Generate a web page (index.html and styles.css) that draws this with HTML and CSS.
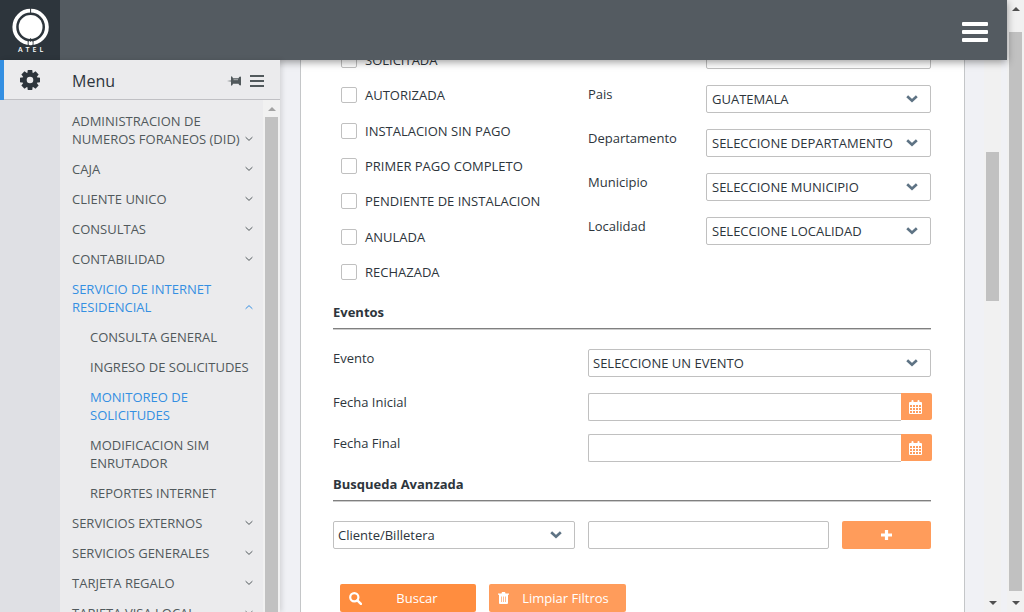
FILE: index.html
```html
<!DOCTYPE html>
<html lang="es">
<head>
<meta charset="utf-8">
<title>Monitoreo de solicitudes</title>
<link rel="stylesheet" href="styles.css">
</head>
<body>
<svg class="sprite" aria-hidden="true">
  <symbol id="down" viewBox="0 0 12 8"><path d="M1.200 1.300L6 5.700l4.800-4.400" fill="none" stroke="currentColor" stroke-width="2.700"/></symbol>
  <symbol id="angle" viewBox="0 0 8 6"><path d="M.6 1.200L4 4.400l3.400-3.200" fill="none" stroke="currentColor" stroke-width="1"/></symbol>
  <symbol id="calendar" viewBox="0 0 13 14"><path fill="currentColor" fill-rule="evenodd" d="M1 2h1.500V1Q2.500 0 3.500 0t1 1v1h4V1q0-1 1-1t1 1v1H12q1 0 1 1v10q0 1-1 1H1q-1 0-1-1V3q0-1 1-1zM1 5v2h2V5zm3 0v2h2V5zm3 0v2h2V5zm3 0v2h2V5zM1 8v2h2V8zm3 0v2h2V8zm3 0v2h2V8zm3 0v2h2V8zM1 11v2h2v-2zm3 0v2h2v-2zm3 0v2h2v-2zm3 0v2h2v-2z"/></symbol>
  <symbol id="up-tri" viewBox="0 0 8 4"><path d="M0 4h8L4 0z" fill="currentColor"/></symbol>
  <symbol id="down-tri" viewBox="0 0 8 4"><path d="M0 0h8L4 4z" fill="currentColor"/></symbol>
</svg>
<div class="viewport">
  <div class="app">
    <header class="topbar">
      <a class="logo" href="#" aria-label="ATEL">
        <svg width="60" height="60" viewBox="0 0 60 60">
          <circle cx="30.600" cy="27" r="16.300" fill="none" stroke="#fff" stroke-width="3.800"/>
          <path d="M30.600 8v5.500M28.200 41v6M33 41v6" stroke="#2d353c" stroke-width="1"/>
          <circle cx="30.600" cy="27" r="11.900" fill="#fff"/>
          <circle cx="30.600" cy="43" r="1.900" fill="#fff"/>
          <path d="M30.600 38v4" stroke="#2d353c" stroke-width=".8"/>
          <text class="logo-text" x="18 25.500 32.500 39.500" y="52">ATEL</text>
        </svg>
      </a>
      <button class="burger" type="button" aria-label="Abrir menu"><span></span><span></span><span></span></button>
    </header>
    <div class="body">
      <aside class="sidebar">
        <div class="sidebar-head">
          <button class="gear" type="button" aria-label="Configuracion">
            <svg width="20" height="20" viewBox="0 0 20 20"><g fill="currentColor"><path id="t" d="M7.800 0h4.400l.8 5H7z"/><use href="#t" transform="rotate(45 10 10)"/><use href="#t" transform="rotate(90 10 10)"/><use href="#t" transform="rotate(135 10 10)"/><use href="#t" transform="rotate(180 10 10)"/><use href="#t" transform="rotate(225 10 10)"/><use href="#t" transform="rotate(270 10 10)"/><use href="#t" transform="rotate(315 10 10)"/></g><circle cx="10" cy="10" r="5.300" fill="none" stroke="currentColor" stroke-width="4"/></svg>
          </button>
          <h1>Menu</h1>
          <button class="plain" type="button" aria-label="Fijar menu"><svg width="14" height="10" viewBox="0 0 14 10"><path fill="currentColor" d="M0 5l4-.6V1q0-.8.600-.8 1 .3 1.400 2h5.500Q12 .5 13.200.5q.8 0 .8.800v7.400q0 .8-.8.800-1.200 0-1.700-1.700H6q-.4 1.700-1.400 2Q4 9.800 4 9V5.600z"/><path d="M6.500 3.700h4.500" stroke="#ebebed" stroke-width=".6"/></svg></button>
          <button class="plain" type="button" aria-label="Contraer menu"><svg width="14" height="12" viewBox="0 0 14 12"><path d="M0 1h14M0 6h14M0 11h14" stroke="currentColor" stroke-width="2"/></svg></button>
        </div>
        <div class="sidebar-body">
          <div class="rail"></div>
          <nav class="menu" aria-label="Menu">
            <ul>
              <li><a href="#"><span>ADMINISTRACION DE NUMEROS FORANEOS (DID)</span><svg><use href="#angle"/></svg></a></li>
              <li><a href="#"><span>CAJA</span><svg><use href="#angle"/></svg></a></li>
              <li><a href="#"><span>CLIENTE UNICO</span><svg><use href="#angle"/></svg></a></li>
              <li><a href="#"><span>CONSULTAS</span><svg><use href="#angle"/></svg></a></li>
              <li><a href="#"><span>CONTABILIDAD</span><svg><use href="#angle"/></svg></a></li>
              <li><a class="active open" href="#"><span>SERVICIO DE INTERNET RESIDENCIAL</span><svg><use href="#angle"/></svg></a>
                <ul class="submenu">
                  <li><a href="#">CONSULTA GENERAL</a></li>
                  <li><a href="#">INGRESO DE SOLICITUDES</a></li>
                  <li><a class="active" href="#">MONITOREO DE SOLICITUDES</a></li>
                  <li><a href="#">MODIFICACION SIM ENRUTADOR</a></li>
                  <li><a href="#">REPORTES INTERNET</a></li>
                </ul>
              </li>
              <li><a href="#"><span>SERVICIOS EXTERNOS</span><svg><use href="#angle"/></svg></a></li>
              <li><a href="#"><span>SERVICIOS GENERALES</span><svg><use href="#angle"/></svg></a></li>
              <li><a href="#"><span>TARJETA REGALO</span><svg><use href="#angle"/></svg></a></li>
              <li><a href="#"><span>TARJETA VISA LOCAL</span><svg><use href="#angle"/></svg></a></li>
            </ul>
          </nav>
          <div class="scroll scroll-menu" aria-hidden="true"><svg class="tri"><use href="#up-tri"/></svg><div class="thumb"></div></div>
        </div>
      </aside>
      <main class="main">
        <form class="card">
          <section class="columns filters">
            <ul class="checks">
              <li><input type="checkbox" id="c1"><label for="c1">SOLICITADA</label></li>
              <li><input type="checkbox" id="c2"><label for="c2">AUTORIZADA</label></li>
              <li><input type="checkbox" id="c3"><label for="c3">INSTALACION SIN PAGO</label></li>
              <li><input type="checkbox" id="c4"><label for="c4">PRIMER PAGO COMPLETO</label></li>
              <li><input type="checkbox" id="c5"><label for="c5">PENDIENTE DE INSTALACION</label></li>
              <li><input type="checkbox" id="c6"><label for="c6">ANULADA</label></li>
              <li><input type="checkbox" id="c7"><label for="c7">RECHAZADA</label></li>
            </ul>
            <div class="places wide">
              <input class="box first" type="text" aria-label="Filtro">
              <label for="pais">Pais</label>
              <div class="select"><select id="pais"><option>GUATEMALA</option></select><svg><use href="#down"/></svg></div>
              <label for="depto">Departamento</label>
              <div class="select"><select id="depto"><option>SELECCIONE DEPARTAMENTO</option></select><svg><use href="#down"/></svg></div>
              <label for="muni">Municipio</label>
              <div class="select"><select id="muni"><option>SELECCIONE MUNICIPIO</option></select><svg><use href="#down"/></svg></div>
              <label for="loc">Localidad</label>
              <div class="select"><select id="loc"><option>SELECCIONE LOCALIDAD</option></select><svg><use href="#down"/></svg></div>
            </div>
          </section>
          <h2>Eventos</h2>
          <section class="columns">
            <label for="evento">Evento</label>
            <div class="select wide"><select id="evento"><option>SELECCIONE UN EVENTO</option></select><svg><use href="#down"/></svg></div>
          </section>
          <section class="columns dates">
            <label for="fi">Fecha Inicial</label>
            <div class="date wide"><input class="box" type="text" id="fi"><button type="button" aria-label="Elegir fecha inicial"><svg width="13" height="14"><use href="#calendar"/></svg></button></div>
            <label for="ff">Fecha Final</label>
            <div class="date wide"><input class="box" type="text" id="ff"><button type="button" aria-label="Elegir fecha final"><svg width="13" height="14"><use href="#calendar"/></svg></button></div>
          </section>
          <h2>Busqueda Avanzada</h2>
          <section class="columns">
            <div class="select"><select aria-label="Campo de busqueda"><option>Cliente/Billetera</option></select><svg><use href="#down"/></svg></div>
            <input class="box" type="text" aria-label="Valor a buscar">
            <button class="btn add" type="button" aria-label="Agregar"><svg width="11" height="10" viewBox="0 0 11 10"><path d="M5.500 0v10M0 5h11" stroke="#fff" stroke-width="3.200"/></svg></button>
          </section>
          <div class="actions">
            <button class="btn primary" type="submit"><svg width="13" height="13" viewBox="0 0 13 13"><circle cx="5.300" cy="5.300" r="4.100" fill="none" stroke="#fff" stroke-width="2.200"/><path d="M8.300 8.300l3.600 3.600" stroke="#fff" stroke-width="2.400" stroke-linecap="round"/></svg><span>Buscar</span></button>
            <button class="btn" type="reset"><svg width="11" height="12" viewBox="0 0 11 12"><path fill="#fff" d="M3.500 1.500L4 0h3l.5 1.500H11v1.300h-1V11q0 1-1 1H2q-1 0-1-1V2.800H0V1.500z"/><path d="M3.500 4.500v5.500M5.500 4.500v5.500M7.500 4.500v5.500" stroke="#ff9c5b" stroke-width=".7"/></svg><span>Limpiar Filtros</span></button>
          </div>
        </form>
        <div class="scroll scroll-main" aria-hidden="true"><div class="thumb"></div><svg class="tri"><use href="#down-tri"/></svg></div>
      </main>
    </div>
  </div>
  <div class="scroll scroll-page" aria-hidden="true"><svg class="tri"><use href="#up-tri"/></svg><div class="thumb"></div><svg class="tri"><use href="#down-tri"/></svg></div>
</div>
</body>
</html>
```
FILE: styles.css
```css
* { box-sizing: border-box; }
body { margin: 0; font: 13px/18px "Open Sans", sans-serif; color: #2d353c; }
ul { list-style: none; margin: 0; padding: 0; }
a { color: inherit; text-decoration: none; }
button, input, select { font: inherit; color: inherit; margin: 0; }
button { border: 0; padding: 0; background: none; }
svg { display: block; }
.sprite { position: absolute; width: 0; height: 0; }

.viewport { display: flex; height: 100vh; overflow: hidden; background: #f0f1f5; }
.app { flex: 1; min-width: 0; display: flex; flex-direction: column; }
.topbar { position: relative; z-index: 2; flex: none; display: flex; justify-content: space-between; align-items: center; height: 60px; padding-right: 19px; background: #545b61; box-shadow: 0 2px 8px rgba(0, 0, 0, .4); }
.logo { background: #2d353c; }
.logo-text { font: 600 7px "Open Sans", sans-serif; fill: #fff; }
.burger { display: grid; gap: 4px; width: 26px; padding-top: 4px; }
.burger span { height: 4px; background: #fff; border-radius: 1px; }

.body { flex: 1; min-height: 0; display: flex; }
.sidebar { position: relative; z-index: 3; flex: none; width: 280px; display: flex; flex-direction: column; background: #ebebed; box-shadow: 2px 0 5px rgba(0, 0, 0, .12); }
.sidebar-head { flex: none; display: flex; align-items: center; gap: 9px; height: 40px; padding-right: 16px; border-bottom: 1px solid #c0c0c4; }
.gear { width: 60px; height: 40px; display: grid; place-items: center; border-left: 4px solid #348fe2; padding-right: 4px; color: #2d353c; }
.sidebar-head h1 { flex: 1; margin: 0; padding: 2px 0 0 3px; font-size: 16px; font-weight: 400; line-height: 24px; }
.plain { color: #51595c; padding-top: 3px; }
.sidebar-body { flex: 1; min-height: 0; display: flex; }
.rail { flex: none; width: 60px; background: #dfe0e4; }
.menu { flex: 1; min-width: 0; padding: 6px 10px 0 12px; overflow: hidden; color: #51595c; }
.menu a { display: flex; justify-content: space-between; align-items: flex-end; gap: 4px; padding: 6px 0; }
.menu a svg { flex: none; width: 8px; height: 6px; margin-bottom: 6px; }
.menu .active { color: #348fe2; }
.menu .open svg { transform: rotate(180deg); }
.submenu { padding-left: 18px; }

.scroll { flex: none; display: flex; flex-direction: column; align-items: center; background: #f1f1f1; color: #505050; }
.scroll .tri { flex: none; width: 8px; height: 4px; margin: 7px 0; }
.thumb { width: 13px; background: #c1c1c1; }
.scroll-menu { width: 17px; color: #a3a3a3; }
.scroll-menu .thumb { flex: 1; }
.scroll-menu .tri { margin-bottom: 6px; }
.scroll-main { width: 17px; }
.scroll-main .thumb { height: 149px; margin-top: 92px; margin-bottom: auto; }
.scroll-page { width: 17px; }
.scroll-page .thumb { flex: 1; margin: 14px 0 3px; }

.main { flex: 1; min-width: 0; display: flex; gap: 19px; padding: 0 6px 0 20px; overflow: hidden; }
.card { flex: 1; min-width: 0; padding: 0 33px 0 32px; background: #fff; border: 1px solid #c4c6c8; border-width: 0 1px; }
.columns { display: grid; grid-template-columns: 242fr 241fr 89fr; gap: 13px; align-items: start; }
.wide { grid-column: span 2; }
.filters { margin-top: -19px; }
.checks { display: flex; flex-direction: column; justify-content: space-between; height: 228px; margin: 11px 0 1px; padding-left: 8px; }
.checks li { display: flex; align-items: center; gap: 8px; height: 16px; }
.checks input { appearance: none; width: 16px; height: 16px; border: 1px solid #c0c0c0; border-radius: 2px; background: #fff; }
.places { display: grid; grid-template-columns: 118fr 225fr; row-gap: 16px; }
.places .first { grid-column: 2; }

.box, .select select { width: 100%; min-width: 0; height: 28px; border: 1px solid #c0c0c0; border-radius: 2px; background: #fff; }
.select { display: grid; align-items: center; }
.select > * { grid-area: 1 / 1; }
.select select { appearance: none; padding: 0 30px 0 4px; }
.places .select select { padding-left: 5px; }
.select svg { justify-self: end; width: 12px; height: 8px; margin-right: 13px; color: #5e7384; pointer-events: none; }
h2 { margin: 0 0 20px; padding-bottom: 6px; border-bottom: 1px solid #808080; box-shadow: 0 1px #ccc; font-size: 13px; font-weight: 700; line-height: 19px; }
.filters + h2 { margin-top: 22px; }
.dates { margin-top: 16px; }
.dates + h2 { margin-top: 13px; }
.date { display: flex; margin-right: -1px; }
.date .box { flex: 1; border-right: 0; border-radius: 2px 0 0 2px; }
.date button { width: 31px; height: 27px; padding-right: 2px; display: grid; place-items: center; background: #ff9c5b; color: #fff; border-radius: 0 2px 2px 0; }
.btn { height: 28px; display: flex; align-items: center; background: #ff9c5b; color: #fff; border-radius: 2px; }
.add { justify-content: center; }
.actions { display: flex; gap: 13px; margin-top: 35px; padding-left: 7px; }
.actions .btn { width: 137px; padding: 0 4px 0 9px; }
.actions span { flex: 1; text-align: center; }
.actions .primary { width: 136px; background: #ff8d3f; }
```
